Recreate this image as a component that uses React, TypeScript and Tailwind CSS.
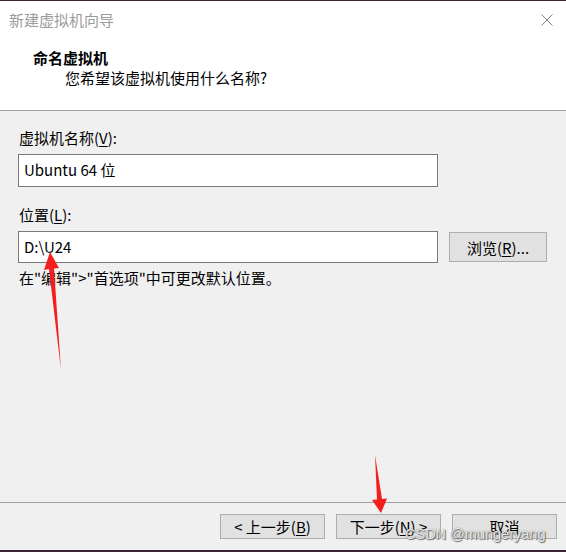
import React from "react";

const font = "font-['Noto_Sans_CJK_SC','Noto_Sans',sans-serif]";

function Key({ k }: { k: string }) {
  return <span className="underline underline-offset-2">{k}</span>;
}

function DialogButton({ children }: { children: React.ReactNode }) {
  return (
    <button className="h-[25px] w-[105px] border border-[#adadad] bg-[#e1e1e1] text-[15px] leading-none text-black">
      {children}
    </button>
  );
}

export default function App() {
  return (
    <div className={`relative flex h-[552px] w-[566px] flex-col overflow-hidden bg-[#f0f0f0] text-black ${font}`}>
      <div className="h-px bg-[#3b2a35]" />

      {/* header */}
      <div className="h-[110px] border-b border-[#a0a0a0] bg-white">
        <div className="flex h-[38px] items-center justify-between pl-[9px] pr-[13px]">
          <span className="text-[15px] leading-[20px] text-[#9b9b9b]">新建虚拟机向导</span>
          <svg width="12" height="12" viewBox="0 0 12 12" className="mb-[1px]">
            <path d="M0.5 0.5 L11.5 11.5 M11.5 0.5 L0.5 11.5" stroke="#7f7f7f" strokeWidth="1" fill="none" />
          </svg>
        </div>
        <div className="mt-[9px] pl-[33px] text-[15px] font-bold leading-[20px]">命名虚拟机</div>
        <div className="pl-[65px] text-[15px] leading-[20px]">您希望该虚拟机使用什么名称?</div>
      </div>

      {/* body */}
      <div className="flex-1 px-[18px] pt-[17px] text-[15px]">
        <div className="pl-px leading-[20px]">
          虚拟机名称(<Key k="V" />):
        </div>
        <div className="mt-[6px] flex h-[33px] w-[420px] items-center border border-[#7a7a7a] bg-white px-[5px]">
          Ubuntu 64 位
        </div>

        <div className="mt-[18px] pl-px leading-[20px]">
          位置(<Key k="L" />):
        </div>
        <div className="mt-[6px] flex items-center gap-[11px]">
          <div className="flex h-[32px] w-[420px] items-center border border-[#7a7a7a] bg-white px-[5px]">
            D:\U24
          </div>
          <button className="h-[30px] w-[98px] border border-[#adadad] bg-[#e1e1e1] text-[15px] leading-none">
            浏览(<Key k="R" />)...
          </button>
        </div>
        <div className="mt-[5px] pl-px leading-[20px]">在"编辑"&gt;"首选项"中可更改默认位置。</div>
      </div>

      {/* footer */}
      <div className="flex h-[48px] justify-end gap-[11px] border-t border-[#a0a0a0] pr-[9px] pt-[11px]">
        <DialogButton>
          &lt; 上一步(<Key k="B" />)
        </DialogButton>
        <DialogButton>
          下一步(<Key k="N" />) &gt;
        </DialogButton>
        <DialogButton>取消</DialogButton>
      </div>
      <div className="h-[2px] bg-[#3b2433]" />

      {/* annotation arrows */}
      <svg className="pointer-events-none absolute inset-0" width="566" height="552" viewBox="0 0 566 552">
        <polygon
          points="50,252 44,270 49,269 61,370 54,268.5 59,268"
          fill="#f51d1d"
        />
        <polygon
          points="381,513 387,498.5 382,499 375,455 377,499.5 372,500"
          fill="#f51d1d"
        />
      </svg>

      <span className="pointer-events-none absolute left-[405px] top-[524px] font-['Liberation_Sans',sans-serif] text-[14.5px] leading-[20px] text-white/85 [text-shadow:0_0_1px_#555,1px_1px_1px_#666]">
        CSDN @mungeryang
      </span>
    </div>
  );
}
